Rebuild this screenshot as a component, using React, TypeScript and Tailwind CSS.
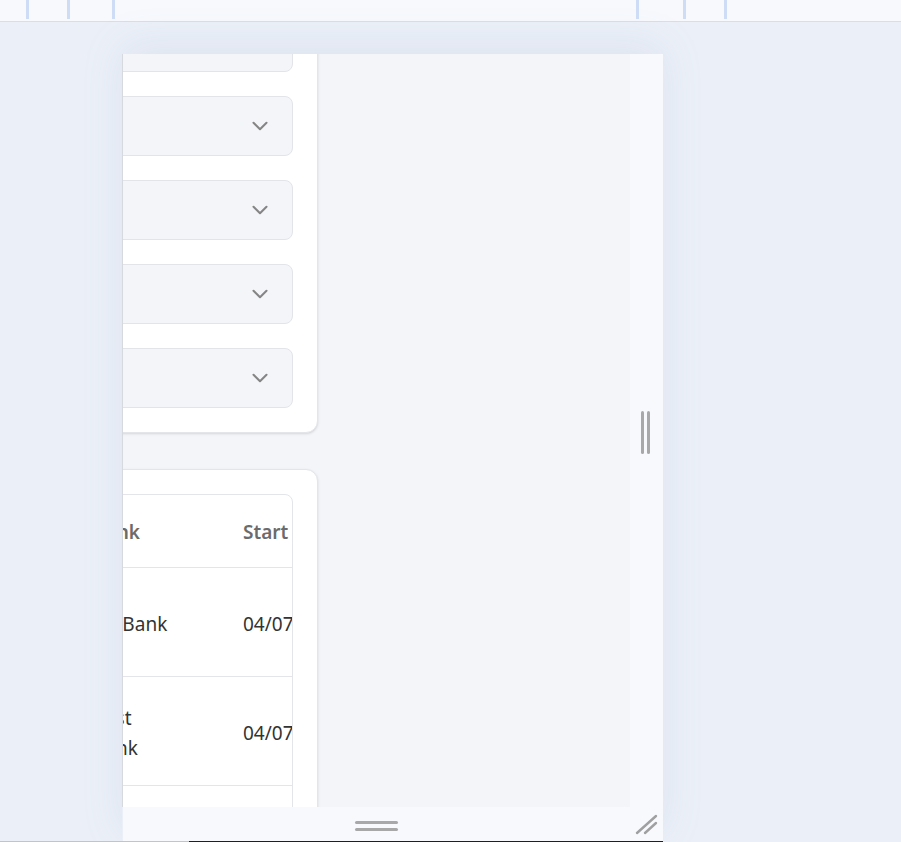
import { ChevronDown } from 'lucide-react';

const rows = [
  { name: 'Checking', bank: 'TD Bank', start: '04/07/2025' },
  { name: 'Savings', bank: 'First Bank', start: '04/07/2025' },
  { name: 'Brokerage', bank: 'Ally Bank', start: '04/07/2025' },
];

function SelectBox() {
  return (
    <div className="flex h-[60px] items-center justify-end rounded-lg border border-[#e2e4e9] bg-[#f4f5f9] pr-[19px]">
      <ChevronDown className="h-[26px] w-[26px] text-[#858585]" strokeWidth={1.9} />
    </div>
  );
}

function Cells({ name, bank, start }: { name: string; bank: string; start: string }) {
  return (
    <>
      <div className="w-[227px] shrink-0 pl-6">{name}</div>
      <div className="w-[148px] shrink-0 pl-[22px] pr-[46px]">{bank}</div>
      <div className="w-[200px] shrink-0 pl-6 whitespace-nowrap">{start}</div>
    </>
  );
}

export default function App() {
  return (
    <div className="h-[842px] overflow-hidden bg-[#ebf0f8] font-['Noto_Sans',sans-serif]">
      {/* breakpoint ruler */}
      <div className="flex h-[22px] border-b border-[#d4def3] bg-[#f7f9fd]">
        <div className="ml-[26px] h-[19px] w-[3px] bg-[#cfdcf6]" />
        <div className="ml-[38px] h-[19px] w-[3px] bg-[#cfdcf6]" />
        <div className="ml-[42px] h-[19px] w-[3px] bg-[#cfdcf6]" />
        <div className="ml-[521px] h-[19px] w-[3px] bg-[#cfdcf6]" />
        <div className="ml-[44px] h-[19px] w-[3px] bg-[#cfdcf6]" />
        <div className="ml-[38px] h-[19px] w-[3px] bg-[#cfdcf6]" />
      </div>

      {/* device frame */}
      <div className="ml-[122px] mt-[32px] w-[541px] shadow-[0_-8px_40px_rgba(120,140,180,0.12)]">
        <div className="flex">
          <div className="h-[753px] w-[508px] overflow-hidden border-l border-[#d6d9de] bg-[#f3f5f9]">
            <div className="-ml-[305px] -mt-[67px] flex w-[500px] flex-col gap-9">
              <div className="flex flex-col gap-6 rounded-xl border border-[#e3e5e9] bg-white p-6 shadow-sm">
                <SelectBox />
                <SelectBox />
                <SelectBox />
                <SelectBox />
                <SelectBox />
              </div>

              <div className="rounded-xl border border-[#e3e5e9] bg-white p-6 shadow-sm">
                <div className="overflow-hidden rounded-lg border border-[#e3e5e9] text-[19px] leading-[30px]">
                  <div className="flex h-[72px] items-center pt-[2px] font-semibold text-[#6b6b6b]">
                    <Cells name="Account" bank="Bank" start="Start Date" />
                  </div>
                  {rows.map((r) => (
                    <div key={r.name} className="flex h-[109px] items-center border-t border-[#e3e5e9] pt-[3px] text-[#333333]">
                      <Cells name={r.name} bank={r.bank} start={r.start} />
                    </div>
                  ))}
                </div>
              </div>
            </div>
          </div>

          {/* right resize handle */}
          <div className="flex w-[33px] items-center justify-center gap-[3px] bg-[#f7f9fd] pr-[2px] pt-[3px]">
            <div className="h-[43px] w-[3px] rounded-full bg-[#a8a8a8]" />
            <div className="h-[43px] w-[3px] rounded-full bg-[#a8a8a8]" />
          </div>
        </div>

        {/* bottom resize handle */}
        <div className="ml-[1px] flex h-[34px] bg-[#f7f9fd]">
          <div className="flex w-[507px] flex-col items-center justify-center gap-1 pt-[3px]">
            <div className="h-[3px] w-[43px] rounded-full bg-[#a8a8a8]" />
            <div className="h-[3px] w-[43px] rounded-full bg-[#a8a8a8]" />
          </div>
          <div className="w-[33px]">
            <svg width="33" height="34" viewBox="0 0 33 34" fill="none" stroke="#a0a0a0" strokeWidth="2.4" strokeLinecap="round">
              <path d="M7 26 L26 9" />
              <path d="M15 26 L26 16" />
            </svg>
          </div>
        </div>
      </div>

      <div className="flex h-px">
        <div className="w-[189px] bg-[#c4c4c4]" />
        <div className="w-[474px] bg-[#1f1f1f]" />
      </div>
    </div>
  );
}
